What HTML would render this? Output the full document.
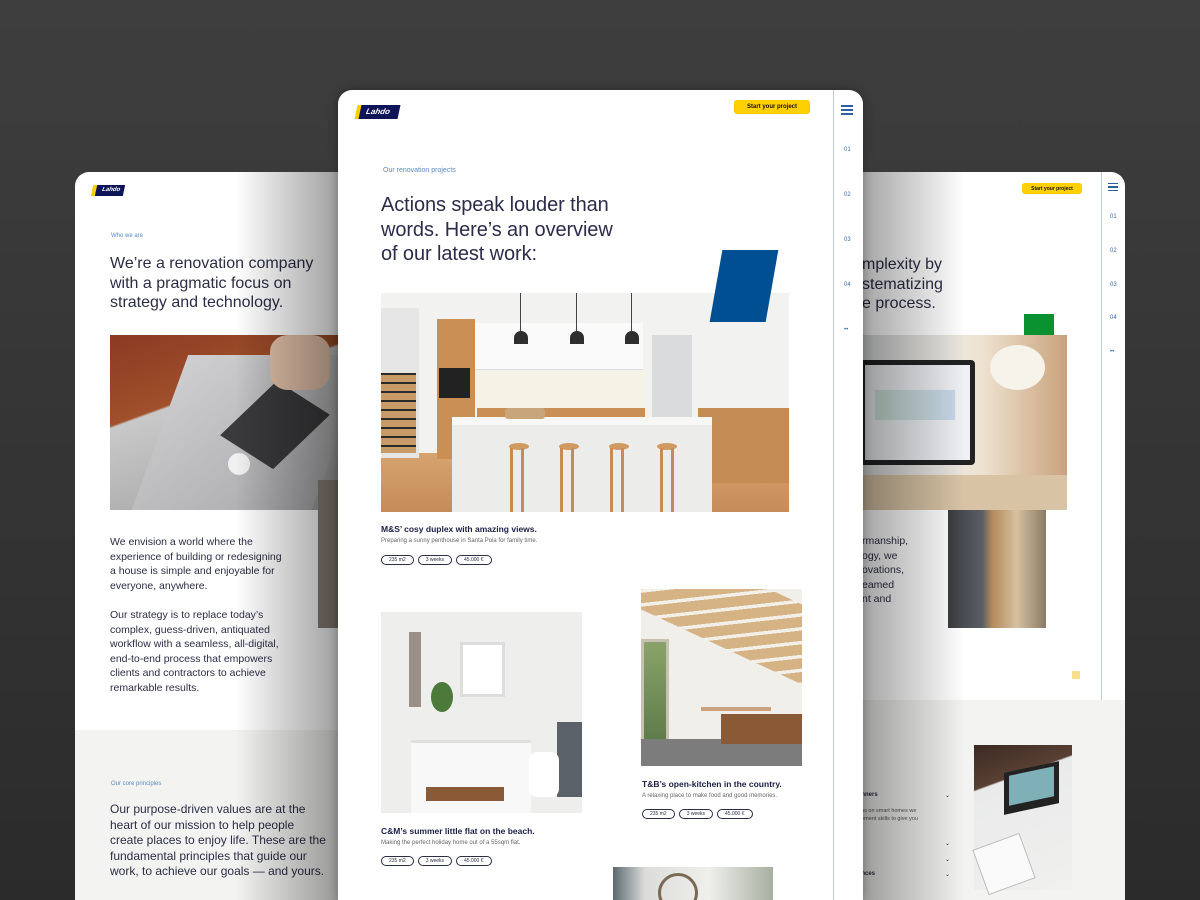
<!DOCTYPE html>
<html><head><meta charset="utf-8"><style>
*{margin:0;padding:0;box-sizing:border-box}
body{width:1200px;height:900px;overflow:hidden;position:relative;background:linear-gradient(#3e3e3e,#2b2b2b);font-family:"Liberation Sans",sans-serif;color:#2b2d45}
.a{position:absolute}
.card{position:absolute;background:#fff;overflow:hidden}
.logo{position:absolute;height:14px;width:43px}
.logo i{position:absolute;left:0;top:0;width:8px;height:100%;background:#ffd000;transform:skewX(-12deg)}
.logo b{position:absolute;left:4px;top:0;right:0;height:100%;background:#0d1457;transform:skewX(-12deg);color:#fff;font-size:8px;font-style:italic;line-height:14px;padding-left:6px}
.btn{position:absolute;background:#ffd000;border-radius:3px;font-size:6px;font-weight:bold;color:#111;display:flex;align-items:center;justify-content:center}
.num{position:absolute;font-size:6px;color:#3a6aa8}
.pills{position:absolute;display:flex;gap:4px}
.pill{border:1px solid #2b2d45;border-radius:6px;font-size:5px;height:10px;line-height:8px;padding:0 7px;color:#2b2d45}
.t{font-size:8.5px;font-weight:bold;color:#1c1f45}
.s{font-size:6px;color:#666}
.h{font-weight:300;color:#2b2d45;white-space:nowrap}
</style></head><body>

<!-- LEFT CARD -->
<div class="card" style="left:75px;top:172px;width:270px;height:728px;border-radius:14px 0 0 0">
 <div class="logo" style="left:17px;top:13px;width:32px;height:11px"><i></i><b style="font-size:6px;line-height:11px">Lahdo</b></div>
 <div class="a" style="left:36px;top:61px;font-size:6px;color:#5b8ac0">Who we are</div>
 <div class="a h" style="left:35px;top:82px;font-size:16px;line-height:19.5px">We’re a renovation company<br>with a pragmatic focus on<br>strategy and technology.</div>
 <div class="a" style="left:35px;top:163px;width:235px;height:175px;background:linear-gradient(160deg,#8a3a22 0%,#a0502a 35%,#c9c9c9 36%,#b8b8b8 60%,#9a9a9a 100%)">
  <div class="a" style="left:50px;top:20px;width:180px;height:155px;background:linear-gradient(135deg,#cfcfd1,#a9a9ab);transform:skewX(-20deg)"></div>
  <div class="a" style="left:125px;top:60px;width:80px;height:60px;background:#3a3a3c;transform:skewX(-30deg) rotate(25deg)"></div>
  <div class="a" style="left:118px;top:118px;width:22px;height:22px;border-radius:50%;background:#f0f0f0"></div>
  <div class="a" style="left:160px;top:0;width:60px;height:55px;background:#e2c1a8;border-radius:30%"></div>
 </div>
 <div class="a" style="left:243px;top:308px;width:20px;height:148px;background:#8a8078"></div>
 <div class="a" style="left:35px;top:363px;font-size:10.5px;line-height:14.6px;color:#2b2d45;white-space:nowrap">We envision a world where the<br>experience of building or redesigning<br>a house is simple and enjoyable for<br>everyone, anywhere.<br><br>Our strategy is to replace today’s<br>complex, guess-driven, antiquated<br>workflow with a seamless, all-digital,<br>end-to-end process that empowers<br>clients and contractors to achieve<br>remarkable results.</div>
 <div class="a" style="left:0;top:558px;width:270px;height:170px;background:#f3f3f1"></div>
 <div class="a" style="left:36px;top:609px;font-size:6px;color:#5b8ac0">Our core principles</div>
 <div class="a" style="left:35px;top:630px;font-size:12px;line-height:15.5px;white-space:nowrap">Our purpose-driven values are at the<br>heart of our mission to help people<br>create places to enjoy life. These are the<br>fundamental principles that guide our<br>work, to achieve our goals — and yours.</div>
 <div class="a" style="left:160px;top:0;width:110px;height:728px;background:linear-gradient(90deg,rgba(0,0,0,0),rgba(0,0,0,.4))"></div>
</div>

<!-- RIGHT CARD -->
<div class="card" style="left:850px;top:172px;width:275px;height:728px;border-radius:0 14px 0 0">
 <div class="btn" style="left:172px;top:11px;width:60px;height:11px;font-size:5px">Start your project</div>
 <div class="a" style="left:251px;top:0;width:1px;height:530px;background:#b8c9dc"></div>
 <div class="a" style="left:258px;top:11px;width:10px;height:8px;border-top:1.5px solid #2b5fa0;border-bottom:1.5px solid #2b5fa0"><div style="margin-top:2px;height:1.5px;background:#2b5fa0"></div></div>
 <div class="num" style="left:260px;top:42px">01</div><div class="num" style="left:260px;top:76px">02</div><div class="num" style="left:260px;top:110px">03</div><div class="num" style="left:260px;top:143px">04</div><div class="num" style="left:260px;top:177px">••</div>
 <div class="a h" style="left:12px;top:83px;font-size:16px;line-height:19.5px">mplexity by<br>stematizing<br>e process.</div>
 <div class="a" style="left:174px;top:142px;width:30px;height:21px;background:#0a9130"></div>
 <div class="a" style="left:0;top:163px;width:217px;height:175px;background:linear-gradient(90deg,#d8dcdd 0%,#e9e6e0 45%,#efe4d2 60%,#c9a27c 100%)">
  <div class="a" style="left:10px;top:25px;width:115px;height:105px;background:#222;border-radius:4px"></div>
  <div class="a" style="left:15px;top:30px;width:105px;height:95px;background:#eef0f3"></div>
  <div class="a" style="left:25px;top:55px;width:80px;height:30px;background:linear-gradient(90deg,#cfe3d8,#c8d8ea)"></div>
  <div class="a" style="left:0;top:140px;width:217px;height:35px;background:#d8c4a5"></div>
  <div class="a" style="left:140px;top:10px;width:55px;height:45px;border-radius:50%;background:#f6f3ea"></div>
 </div>
 <div class="a" style="left:98px;top:338px;width:98px;height:118px;background:linear-gradient(90deg,#3a3c40 0%,#5a5f66 35%,#b38a5c 45%,#d6c0a0 70%,#8a7a66 100%)"></div>
 <div class="a" style="left:12px;top:362px;font-size:10.5px;line-height:14.6px;white-space:nowrap">rmanship,<br>ogy, we<br>ovations,<br>eamed<br>nt and</div>
 <div class="a" style="left:222px;top:499px;width:8px;height:8px;background:#f8e08a"></div>
 <div class="a" style="left:0;top:528px;width:275px;height:200px;background:#f3f3f1"></div>
 <div class="a" style="left:124px;top:573px;width:98px;height:145px;background:linear-gradient(160deg,#3a2a22 0%,#5a4034 25%,#e9eaea 26%,#f0f0ee 100%)">
  <div class="a" style="left:30px;top:22px;width:55px;height:42px;background:#222;transform:skewY(-12deg)"></div>
  <div class="a" style="left:35px;top:26px;width:45px;height:30px;background:#7fb0b8;transform:skewY(-12deg)"></div>
  <div class="a" style="left:5px;top:95px;width:50px;height:48px;background:#fafafa;border:1px solid #bbb;transform:rotate(-20deg)"></div>
 </div>
 <div class="a" style="left:8px;top:620px;font-size:6px;font-weight:bold;width:92px">anners<span style="float:right;font-weight:normal">⌄</span></div>
 <div class="a" style="left:8px;top:635px;font-size:5.5px;line-height:8px;color:#555">ons on smart homes we<br>gement skills to give you</div>
 <div class="a" style="left:8px;top:668px;font-size:6px;font-weight:bold;width:92px">s<span style="float:right;font-weight:normal">⌄</span></div>
 <div class="a" style="left:8px;top:684px;font-size:6px;font-weight:bold;width:92px">T<span style="float:right;font-weight:normal">⌄</span></div>
 <div class="a" style="left:8px;top:699px;font-size:6px;font-weight:bold;width:92px">ences<span style="float:right;font-weight:normal">⌄</span></div>
 <div class="a" style="left:0;top:0;width:115px;height:728px;background:linear-gradient(90deg,rgba(0,0,0,.4),rgba(0,0,0,0))"></div>
</div>

<!-- CENTER CARD -->
<div class="card" style="left:338px;top:90px;width:525px;height:810px;border-radius:14px 14px 0 0;box-shadow:0 0 10px rgba(0,0,0,.3)">
 <div class="logo" style="left:18px;top:15px"><i></i><b>Lahdo</b></div>
 <div class="btn" style="left:396px;top:10px;width:76px;height:14px">Start your project</div>
 <div class="a" style="left:495px;top:0;width:1px;height:810px;background:#b8c9dc"></div>
 <div class="a" style="left:503px;top:15px;width:12px;height:10px;border-top:2px solid #2b5fa0;border-bottom:2px solid #2b5fa0"><div style="margin-top:2px;height:2px;background:#2b5fa0"></div></div>
 <div class="num" style="left:506px;top:57px">01</div><div class="num" style="left:506px;top:102px">02</div><div class="num" style="left:506px;top:147px">03</div><div class="num" style="left:506px;top:192px">04</div><div class="num" style="left:506px;top:237px">••</div>
 <div class="a" style="left:45px;top:77px;font-size:7px;color:#5b8ac0">Our renovation projects</div>
 <div class="a h" style="left:43px;top:103px;font-size:20px;line-height:24.5px;letter-spacing:-0.1px;color:#2b2d4a">Actions speak louder than<br>words. Here’s an overview<br>of our latest work:</div>
 <!-- kitchen -->
 <div class="a" style="left:43px;top:203px;width:408px;height:219px;background:#f2f2f0;overflow:hidden">
  <div class="a" style="left:0;top:160px;width:408px;height:59px;background:linear-gradient(#d6a36f,#c48c58)"></div>
  <div class="a" style="left:0;top:15px;width:38px;height:150px;background:#e6e6e6"></div>
  <div class="a" style="left:0;top:80px;width:35px;height:80px;background:repeating-linear-gradient(#2a2a2a 0 2px,#c89a68 2px 9px)"></div>
  <div class="a" style="left:56px;top:26px;width:38px;height:140px;background:#c98f55"></div>
  <div class="a" style="left:58px;top:75px;width:31px;height:30px;background:#222"></div>
  <div class="a" style="left:94px;top:30px;width:168px;height:47px;background:#fafafa;border-bottom:1px solid #ddd"></div>
  <div class="a" style="left:96px;top:78px;width:168px;height:38px;background:#f7f2e6"></div>
  <div class="a" style="left:96px;top:115px;width:168px;height:12px;background:#c98f55"></div>
  <div class="a" style="left:133px;top:38px;width:14px;height:13px;background:#2e2e2e;border-radius:7px 7px 0 0"></div>
  <div class="a" style="left:189px;top:38px;width:14px;height:13px;background:#2e2e2e;border-radius:7px 7px 0 0"></div>
  <div class="a" style="left:244px;top:38px;width:14px;height:13px;background:#2e2e2e;border-radius:7px 7px 0 0"></div>
  <div class="a" style="left:139px;top:0;width:1px;height:38px;background:#444"></div>
  <div class="a" style="left:195px;top:0;width:1px;height:38px;background:#444"></div>
  <div class="a" style="left:250px;top:0;width:1px;height:38px;background:#444"></div>
  <div class="a" style="left:271px;top:42px;width:40px;height:90px;background:#d9dbdc"></div>
  <div class="a" style="left:317px;top:115px;width:91px;height:75px;background:#c48c55"></div>
  <div class="a" style="left:71px;top:128px;width:260px;height:91px;background:#ececea"></div>
  <div class="a" style="left:71px;top:124px;width:260px;height:8px;background:#f7f7f5"></div>
  <div class="a" style="left:128px;top:150px;width:20px;height:7px;background:#d19a60;border-radius:50%"></div>
  <div class="a" style="left:178px;top:150px;width:20px;height:7px;background:#d19a60;border-radius:50%"></div>
  <div class="a" style="left:228px;top:150px;width:20px;height:7px;background:#d19a60;border-radius:50%"></div>
  <div class="a" style="left:276px;top:150px;width:20px;height:7px;background:#d19a60;border-radius:50%"></div>
  <div class="a" style="left:124px;top:155px;width:180px;height:64px;background:repeating-linear-gradient(90deg,transparent 0 5px,#c58d55 5px 8px,transparent 8px 16px,#c58d55 16px 19px,transparent 19px 50px)"></div>
  <div class="a" style="left:124px;top:115px;width:40px;height:11px;background:#c9a57a;border-radius:3px"></div>
 </div>
 <div class="a" style="left:378px;top:160px;width:56px;height:72px;background:#004f93;transform:skewX(-10deg)"></div>
 <div class="a t" style="left:43px;top:434px">M&amp;S’ cosy duplex with amazing views.</div>
 <div class="a s" style="left:43px;top:448px">Preparing a sunny penthouse in Santa Pola for family time.</div>
 <div class="pills" style="left:43px;top:465px"><span class="pill">235 m2</span><span class="pill">3 weeks</span><span class="pill">45.000 €</span></div>
 <!-- bath -->
 <div class="a" style="left:43px;top:522px;width:201px;height:201px;background:#eeeeec;overflow:hidden">
  <div class="a" style="left:79px;top:30px;width:45px;height:55px;background:#fff;border:3px solid #ddd"></div>
  <div class="a" style="left:30px;top:128px;width:120px;height:73px;background:#f8f8f8;border-top:3px solid #e0e0e0"></div>
  <div class="a" style="left:45px;top:175px;width:78px;height:14px;background:#8a5a36"></div>
  <div class="a" style="left:28px;top:20px;width:12px;height:75px;background:#9a9088"></div>
  <div class="a" style="left:50px;top:70px;width:22px;height:30px;background:#4b7a3a;border-radius:50%"></div>
  <div class="a" style="left:176px;top:110px;width:25px;height:75px;background:#5b6169"></div>
  <div class="a" style="left:148px;top:140px;width:30px;height:45px;background:#fff;border-radius:8px"></div>
 </div>
 <div class="a t" style="left:43px;top:736px">C&amp;M’s summer little flat on the beach.</div>
 <div class="a s" style="left:43px;top:750px">Making the perfect holiday home out of a 55sqm flat.</div>
 <div class="pills" style="left:43px;top:766px"><span class="pill">235 m2</span><span class="pill">3 weeks</span><span class="pill">45.000 €</span></div>
 <!-- kitchen2 -->
 <div class="a" style="left:303px;top:499px;width:161px;height:177px;background:#f1efea;overflow:hidden">
  <div class="a" style="left:-10px;top:-20px;width:190px;height:80px;background:repeating-linear-gradient(150deg,#d6b385 0 9px,#f3f0ea 9px 12px);transform:skewY(25deg)"></div>
  <div class="a" style="left:0;top:50px;width:28px;height:110px;background:linear-gradient(#8aa36a,#5c7a48);border:3px solid #c8c0b0"></div>
  <div class="a" style="left:0;top:150px;width:161px;height:27px;background:#7c7c7c"></div>
  <div class="a" style="left:80px;top:125px;width:81px;height:30px;background:#8a5a36"></div>
  <div class="a" style="left:60px;top:118px;width:70px;height:4px;background:#caa17a"></div>
 </div>
 <div class="a t" style="left:304px;top:689px">T&amp;B’s open-kitchen in the country.</div>
 <div class="a s" style="left:304px;top:703px">A relaxing place to make food and good memories.</div>
 <div class="pills" style="left:304px;top:719px"><span class="pill">235 m2</span><span class="pill">3 weeks</span><span class="pill">45.000 €</span></div>
 <div class="a" style="left:275px;top:777px;width:160px;height:33px;background:linear-gradient(90deg,#5a6a6e 0%,#dcdcda 20%,#efefec 60%,#a8b0a0 100%)">
  <div class="a" style="left:45px;top:6px;width:40px;height:40px;border-radius:50%;border:3px solid #7a6a55"></div>
 </div>
</div>
</body></html>
